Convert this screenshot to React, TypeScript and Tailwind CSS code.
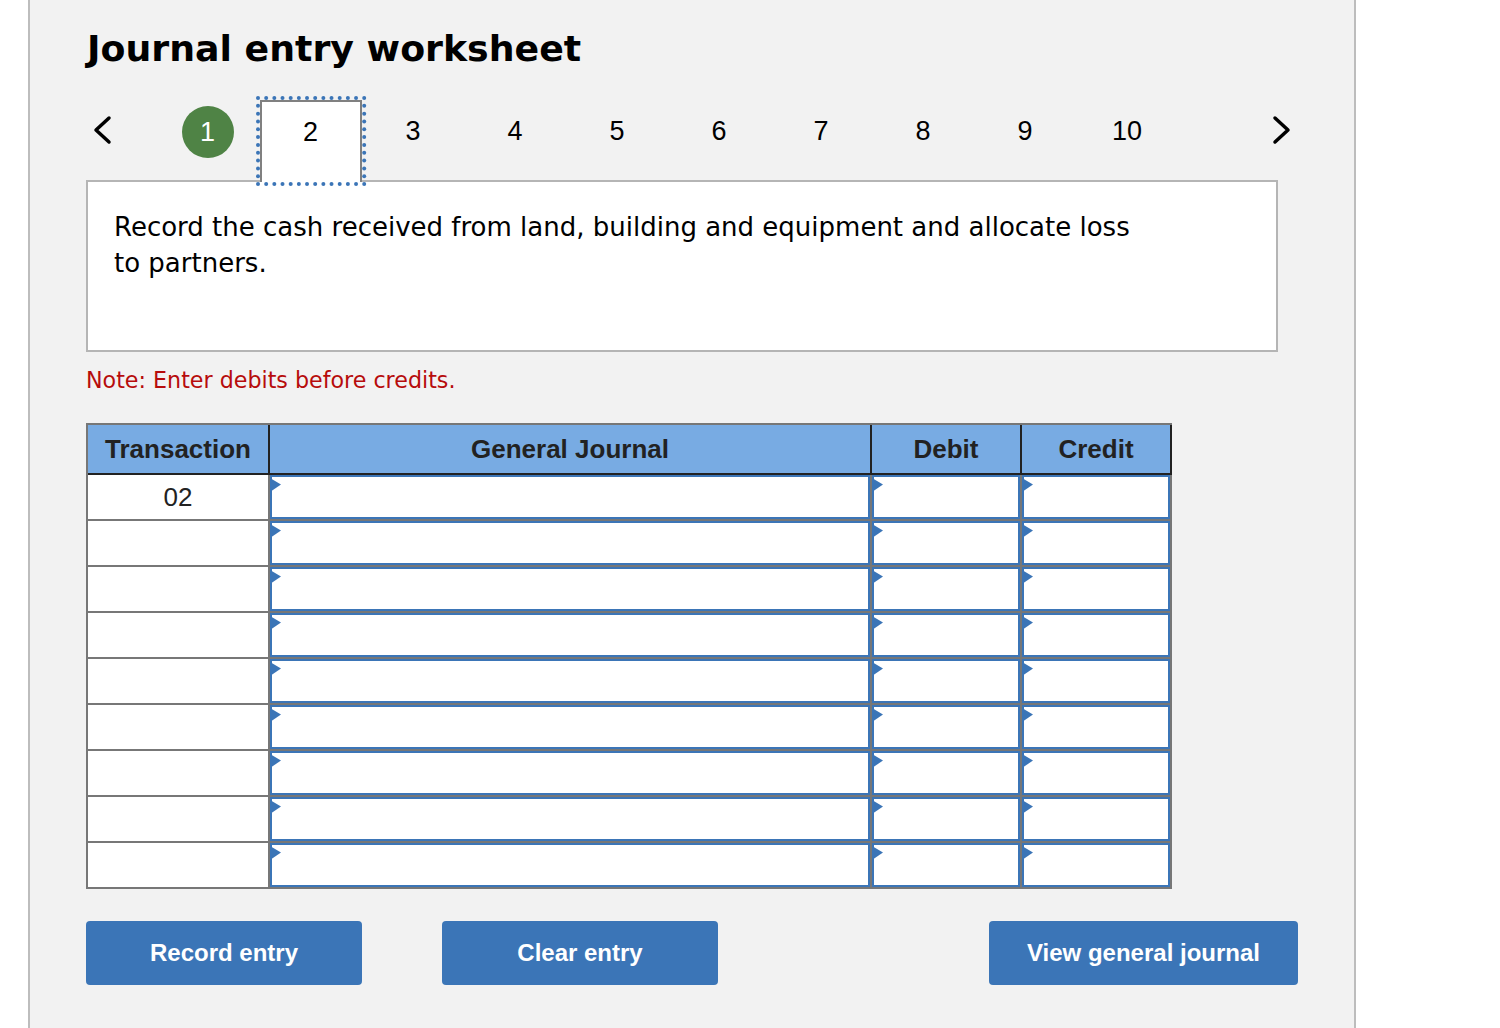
const STEPS = [3, 4, 5, 6, 7, 8, 9, 10];
const ROWS = [0, 1, 2, 3, 4, 5, 6, 7, 8];

function Chevron({ dir }: { dir: "left" | "right" }) {
  return (
    <svg width="24" height="32" viewBox="0 0 24 32" className="-mt-[2px] shrink-0">
      <path
        d={dir === "left" ? "M18 4 L5 16 L18 28" : "M5 4 L18 16 L5 28"}
        fill="none"
        stroke="#000"
        strokeWidth="3.5"
        strokeLinecap="round"
        strokeLinejoin="round"
      />
    </svg>
  );
}

// dotted focus ring round the current step
function FocusDots() {
  const dots: [number, number][] = [];
  for (let i = 0; i <= 13; i++) {
    dots.push([2 + i * 8.17, 2], [2 + i * 8.17, 88]);
  }
  for (let i = 1; i < 11; i++) {
    dots.push([2, 2 + i * 7.82], [108.2, 2 + i * 7.82]);
  }
  return (
    <svg width="111" height="90" viewBox="0 0 111 90" className="absolute left-[-6px] top-[-6px]">
      {dots.map(([x, y], i) => (
        <circle key={i} cx={x} cy={y} r="2" fill="#3b75b7" />
      ))}
    </svg>
  );
}

function EntryCell({ width }: { width: string }) {
  return (
    <div className={`relative h-[44px] ${width} shrink-0 border-2 border-[#3b75b7] bg-white`}>
      <svg width="11" height="14" viewBox="0 0 11 14" className="absolute left-[-2px] top-[1px]">
        <path d="M0 0 L11 6.5 L0 14 Z" fill="#3b75b7" />
      </svg>
    </div>
  );
}

export default function App() {
  return (
    <div className="h-[1028px] overflow-hidden bg-white">
      <div className="ml-[28px] h-[1028px] w-[1328px] border-x-2 border-[#bdbdbd] bg-[#f2f2f2] pl-[56px] font-['DejaVu_Sans',sans-serif]">
        <h1 className="pl-[1px] pt-[25px] text-[36.3px] font-bold leading-[48px] text-black">Journal entry worksheet</h1>

        {/* Steps */}
        <div className="relative z-10 mt-[27px] -mb-[2px] flex h-[82px] w-[1212px] items-start font-['Liberation_Sans',sans-serif] text-[27px] text-black">
          <div className="flex h-[62px] w-[72px] items-center pl-[5px]">
            <Chevron dir="left" />
          </div>
          <div className="flex h-[62px] w-[102px] items-center justify-center pr-[2px]">
            <div className="mt-[2px] flex h-[52px] w-[52px] items-center justify-center rounded-full bg-[#4f8345] pr-[1px] text-white">1</div>
          </div>
          <div className="relative flex h-[82px] w-[102px] justify-center border-2 border-b-0 border-[#808080] bg-white pt-[12px] pr-[1px] leading-[36px]">
            2
            <FocusDots />
          </div>
          {STEPS.map((n) => (
            <div key={n} className="flex h-[62px] w-[102px] items-center justify-center pt-[1px]">{n}</div>
          ))}
          <div className="flex h-[62px] flex-1 items-center justify-end pr-[4px]">
            <Chevron dir="right" />
          </div>
        </div>

        {/* Instruction */}
        <div className="h-[172px] w-[1192px] border-2 border-[#b5b5b5] bg-white pl-[26px] pt-[27px] text-[26px] leading-[36px] text-black">
          <p className="w-[1040px]">Record the cash received from land, building and equipment and allocate loss to partners.</p>
        </div>

        <p className="mt-[14px] text-[22.2px] leading-[28px] text-[#b70c0c]">Note: Enter debits before credits.</p>

        {/* Journal table */}
        <div className="mt-[29px] w-[1086px] border-y-2 border-l-2 border-[#777] font-['Liberation_Sans',sans-serif]">
          <div className="flex h-[50px] border-b-2 border-[#222] bg-[#78abe3] text-[26px] font-bold text-[#222]">
            <div className="flex w-[182px] items-center justify-center border-r-2 border-[#222]">Transaction</div>
            <div className="flex w-[602px] items-center justify-center border-r-2 border-[#222]">General Journal</div>
            <div className="flex w-[150px] items-center justify-center border-r-2 border-[#222]">Debit</div>
            <div className="flex w-[150px] items-center justify-center border-r-2 border-[#222]">Credit</div>
          </div>
          {ROWS.map((r) => (
            <div key={r} className={r < 8 ? "flex h-[46px] border-b-2 border-[#777]" : "flex h-[44px]"}>
              <div className="flex h-[44px] w-[180px] shrink-0 items-center justify-center bg-white text-[26px] text-[#222]">
                {r === 0 ? "02" : ""}
              </div>
              <div className="w-[2px] shrink-0 bg-[#777]" />
              <EntryCell width="w-[600px]" />
              <div className="w-[2px] shrink-0 bg-[#777]" />
              <EntryCell width="w-[148px]" />
              <div className="w-[2px] shrink-0 bg-[#777]" />
              <EntryCell width="w-[148px]" />
              <div className="w-[2px] shrink-0 bg-[#777]" />
            </div>
          ))}
        </div>

        {/* Actions */}
        <div className="mt-[32px] flex w-[1212px] font-['Liberation_Sans',sans-serif] text-[24px] font-bold text-white">
          <button className="h-[64px] w-[276px] rounded-[4px] bg-[#3b75b7]">Record entry</button>
          <button className="ml-[80px] h-[64px] w-[276px] rounded-[4px] bg-[#3b75b7]">Clear entry</button>
          <button className="ml-auto h-[64px] w-[309px] rounded-[4px] bg-[#3b75b7]">View general journal</button>
        </div>
      </div>
    </div>
  );
}
